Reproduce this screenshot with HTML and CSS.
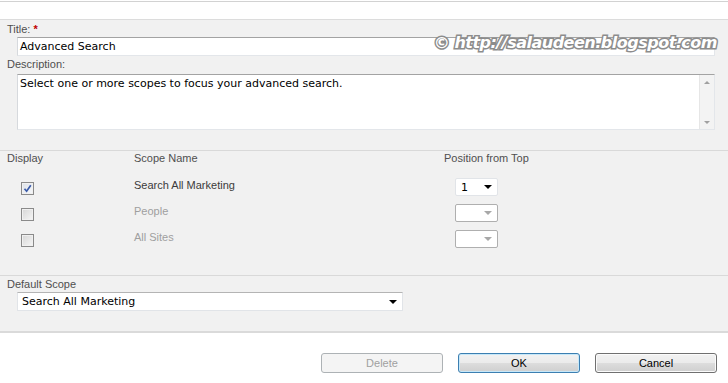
FILE: index.html
```html
<!DOCTYPE html>
<html>
<head>
<meta charset="utf-8">
<link rel="stylesheet" href="styles.css">
</head>
<body>
<div class="page">
  <div class="topbar"></div>
  <div class="panel panel-info">
    <div class="label">Title: <span class="req">*</span></div>
    <div class="field title-field">Advanced Search</div>
    <div class="label desc-label">Description:</div>
    <div class="textarea">
      <div class="textarea-text">Select one or more scopes to focus your advanced search.</div>
      <div class="vscroll">
        <span class="arr up"></span>
        <span class="arr down"></span>
      </div>
    </div>
  </div>
  <div class="panel panel-scopes">
    <div class="scope-grid">
      <div class="hdr">Display</div>
      <div class="hdr">Scope Name</div>
      <div class="hdr">Position from Top</div>

      <div class="cell first"><span class="cb checked"><svg viewBox="0 0 9 9" width="9" height="9"><path d="M1.5 4.8 L3.6 7.2 L7.8 1.2" fill="none" stroke="#3a5aa8" stroke-width="1.7"/></svg></span></div>
      <div class="cell first name">Search All Marketing</div>
      <div class="cell first"><span class="dd"><span class="dd-val">1</span><span class="tri"></span></span></div>

      <div class="cell"><span class="cb"></span></div>
      <div class="cell name dis">People</div>
      <div class="cell"><span class="dd disabled"><span class="dd-val"></span><span class="tri"></span></span></div>

      <div class="cell"><span class="cb"></span></div>
      <div class="cell name dis">All Sites</div>
      <div class="cell"><span class="dd disabled"><span class="dd-val"></span><span class="tri"></span></span></div>
    </div>
  </div>
  <div class="panel panel-default">
    <div class="label">Default Scope</div>
    <div class="select-wide"><span>Search All Marketing</span><span class="tri"></span></div>
  </div>
  <div class="footer">
    <button class="btn disabled">Delete</button>
    <button class="btn focus">OK</button>
    <button class="btn">Cancel</button>
  </div>
  <div class="watermark">© http://salaudeen.blogspot.com</div>
</div>
</body>
</html>
```

FILE: styles.css
```css
html, body {
  margin: 0;
  padding: 0;
  background: #ffffff;
}
body {
  font-family: "Liberation Sans", Arial, sans-serif;
  font-size: 11px;
  color: #4c4c4c;
}
.page {
  position: relative;
  width: 728px;
  height: 383px;
  overflow: hidden;
}
.topbar {
  margin-top: 1px;
  height: 17px;
  border-top: 1px solid #d2d2d2;
  border-bottom: 1px solid #dcdcdc;
  background: #fff;
}
.panel {
  background: #f1f1f1;
  box-sizing: border-box;
}
.panel-info {
  height: 131px;
  padding: 3px 0 0 7px;
  border-bottom: 1px solid #d9d9d9;
}
.label {
  line-height: 13px;
  color: #4f4f4f;
}
.req {
  color: #c00000;
  font-weight: bold;
}
.field {
  margin: 1px 0 0 10px;
  width: 698px;
  height: 19px;
  box-sizing: border-box;
  background: #fff;
  border: 1px solid #e3e6ea;
  border-top-color: #a3a3a3;
  border-left-color: #d6d9dd;
  font-family: "DejaVu Sans", Verdana, sans-serif;
  font-size: 11px;
  color: #000;
  line-height: 17px;
  padding-left: 2px;
}
.desc-label {
  margin-top: 2px;
}
.textarea {
  margin: 3px 0 0 10px;
  width: 698px;
  height: 56px;
  box-sizing: border-box;
  background: #fff;
  border: 1px solid #e3e6ea;
  border-top-color: #a3a3a3;
  border-left-color: #d6d9dd;
  display: flex;
}
.textarea-text {
  flex: 1;
  font-family: "DejaVu Sans", Verdana, sans-serif;
  font-size: 11px;
  color: #000;
  padding: 2px 0 0 2px;
  line-height: 14px;
}
.vscroll {
  width: 15px;
  background: #f3f3f3;
  border-left: 1px solid #e6e6e6;
  display: flex;
  flex-direction: column;
  justify-content: space-between;
  align-items: center;
  padding: 6px 0 5px;
  box-sizing: border-box;
}
.arr {
  width: 0;
  height: 0;
  border-left: 3px solid transparent;
  border-right: 3px solid transparent;
}
.arr.up { border-bottom: 3px solid #a0a0a0; }
.arr.down { border-top: 3px solid #a0a0a0; }

.panel-scopes {
  height: 125px;
  padding: 1px 0 0 7px;
  border-bottom: 1px solid #d9d9d9;
}
.scope-grid {
  display: grid;
  grid-template-columns: 127px 310px 100px;
  grid-template-rows: 13px 39px 26px 26px;
}
.hdr {
  line-height: 13px;
  color: #4f4f4f;
}
.cell.first { margin-top: 13px; }
.name {
  line-height: 13px;
  padding-top: 1px;
  color: #3b3b3b;
}
.name.dis { color: #9f9f9f; }
.cb {
  display: flex;
  align-items: center;
  justify-content: center;
  margin: 4px 0 0 14px;
  width: 13px;
  height: 13px;
  box-sizing: border-box;
  border: 1px solid #8a8a8a;
  background: linear-gradient(135deg, #d6d6d6 0%, #f6f6f6 100%);
  box-shadow: inset 0 0 0 1px #f0f0f0;
}
.cb.checked {
  background: linear-gradient(135deg, #dde1e8 0%, #f7f8fa 100%);
}
.cb svg { display: block; }
.dd {
  display: flex;
  align-items: center;
  justify-content: space-between;
  margin-left: 11px;
  width: 43px;
  height: 18px;
  box-sizing: border-box;
  border: 1px solid #e1e4e8;
  border-radius: 2px;
  background: #fff;
  padding: 0 5px 0 5px;
  font-family: "DejaVu Sans", Verdana, sans-serif;
  font-size: 11px;
  color: #000;
}
.dd.disabled {
  border-color: #afafaf;
}
.tri {
  width: 0;
  height: 0;
  border-left: 4px solid transparent;
  border-right: 4px solid transparent;
  border-top: 4px solid #000;
}
.dd.disabled .tri { border-top-color: #a8a8a8; }

.panel-default {
  height: 57px;
  padding: 2px 0 0 7px;
  border-bottom: 2px solid #dadada;
}
.select-wide {
  display: flex;
  align-items: center;
  justify-content: space-between;
  margin: 1px 0 0 10px;
  width: 386px;
  height: 19px;
  box-sizing: border-box;
  background: #fff;
  border: 1px solid #e1e4e8;
  border-top-color: #b4b4b4;
  padding: 0 5px 0 4px;
  font-family: "DejaVu Sans", Verdana, sans-serif;
  font-size: 11px;
  color: #000;
}
.footer {
  display: flex;
  justify-content: flex-end;
  gap: 15px;
  padding: 20px 11px 0 0;
}
.btn {
  width: 122px;
  height: 20px;
  box-sizing: border-box;
  border: 1px solid #707070;
  border-radius: 3px;
  background: linear-gradient(to bottom, #f2f2f2 0%, #ebebeb 50%, #dddddd 51%, #cfcfcf 100%);
  font-family: "Liberation Sans", Arial, sans-serif;
  font-size: 11px;
  color: #000;
  padding: 0;
  box-shadow: inset 0 0 0 1px #fbfbfb;
}
.btn.focus {
  border-color: #3c7fb1;
  box-shadow: inset 0 0 0 1px #c7e8f9;
}
.btn.disabled {
  border-color: #adb2b5;
  background: #f4f4f4;
  color: #a0a0a0;
  box-shadow: none;
}
.watermark {
  position: absolute;
  top: 32px;
  right: 11px;
  font-family: "DejaVu Sans", Verdana, sans-serif;
  font-weight: bold;
  font-style: italic;
  font-size: 16px;
  letter-spacing: -0.5px;
  color: #ffffff;
  -webkit-text-stroke: 3px #8c8c8c;
  paint-order: stroke fill;
  line-height: 22px;
}
```
